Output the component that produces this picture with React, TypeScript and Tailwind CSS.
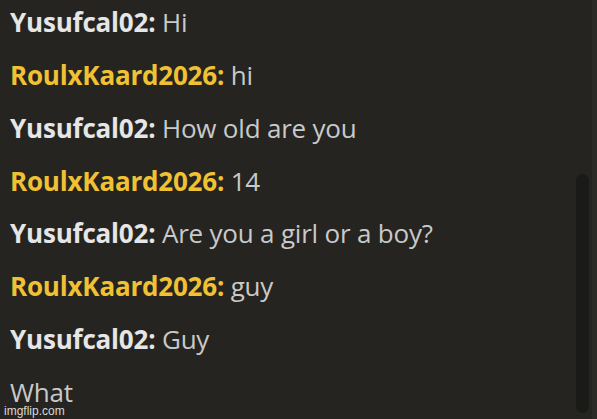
import React from "react";

type Msg = { name?: string; text: string; gold?: boolean };

const messages: Msg[] = [
  { name: "Yusufcal02:", text: "Hi" },
  { name: "RoulxKaard2026:", text: "hi", gold: true },
  { name: "Yusufcal02:", text: "How old are you" },
  { name: "RoulxKaard2026:", text: "14", gold: true },
  { name: "Yusufcal02:", text: "Are you a girl or a boy?" },
  { name: "RoulxKaard2026:", text: "guy", gold: true },
  { name: "Yusufcal02:", text: "Guy" },
  { text: "What" },
];

export default function App() {
  return (
    <div className="relative flex h-[419px] w-[597px] overflow-hidden bg-[#252421] font-['Open_Sans',sans-serif]">
      <div className="flex-1 pl-[10px]">
        <div className="-mt-[4px] flex flex-col">
          {messages.map((m, i) => (
            <div key={i} className="h-[52.86px] whitespace-nowrap text-[26px] leading-[52.86px] tracking-[-0.2px]">
              {m.name && (
                <span className={`font-bold ${m.gold ? "text-[#f0c233]" : "text-[#e6e6e6]"}`}>
                  {m.name}{" "}
                </span>
              )}
              <span className="text-[#c9c9c9]">{m.text}</span>
            </div>
          ))}
        </div>
      </div>

      {/* scrollbar */}
      <div className="flex h-full">
        <div className="w-[16px] pt-[174px]">
          <div className="h-[239px] w-[13px] rounded-full bg-[#1a1a18]" />
        </div>
        <div className="h-full w-[5px] bg-[#2c2b28]" />
      </div>

      {/* watermark */}
      <div className="absolute bottom-[2px] left-[4px] font-['Liberation_Sans',sans-serif] text-[12px] leading-none text-[#d8d8d8]">
        imgflip.com
      </div>
    </div>
  );
}
